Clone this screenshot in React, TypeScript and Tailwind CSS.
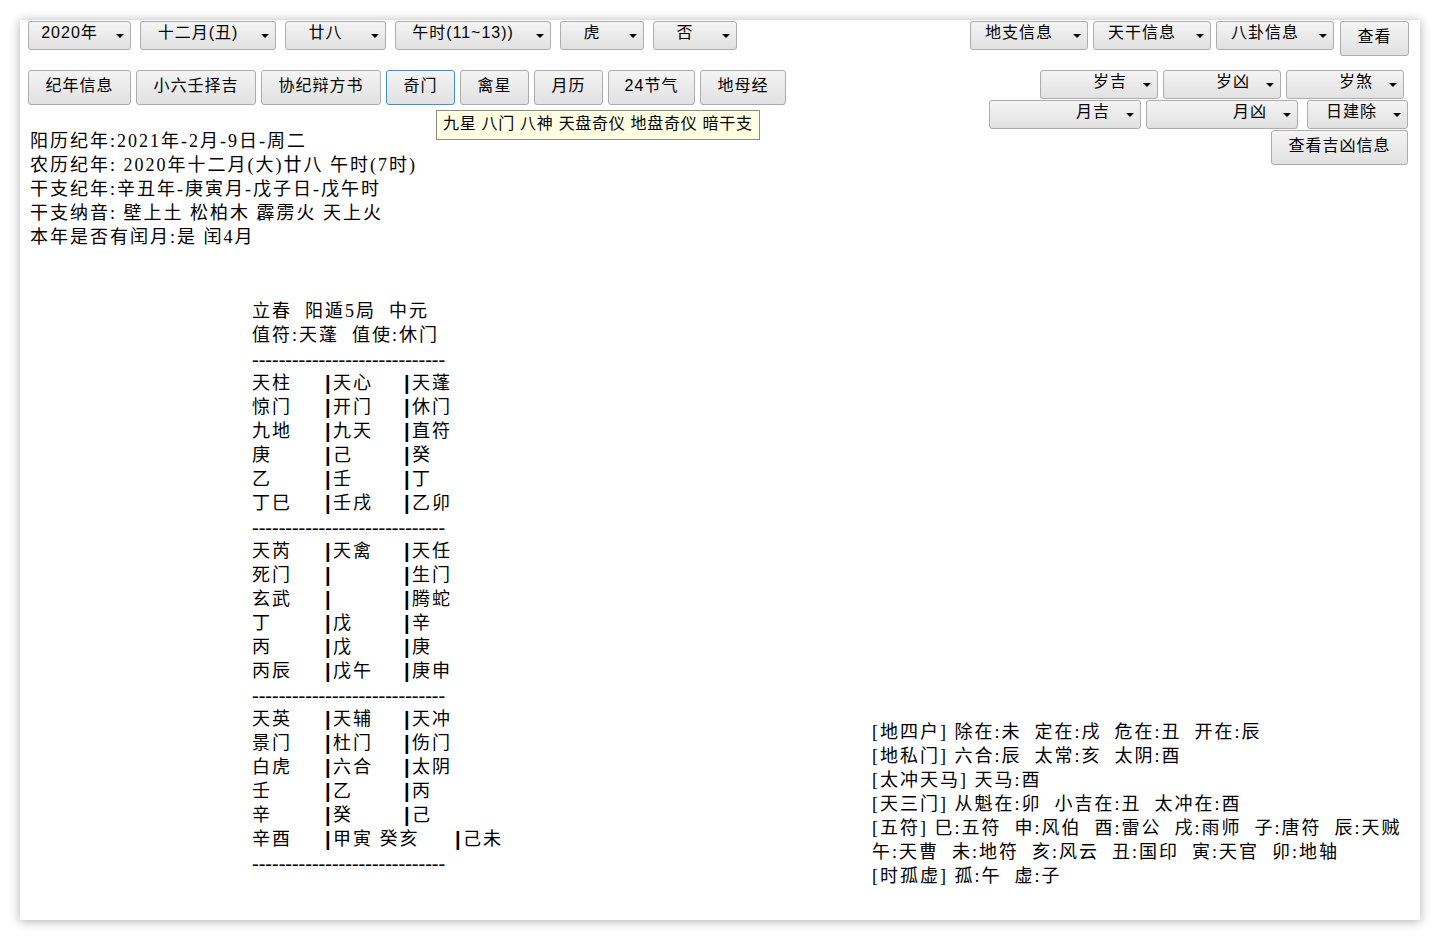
import clsx from 'clsx'

const block1 = [
  ['天柱', '天心', '天蓬'],
  ['惊门', '开门', '休门'],
  ['九地', '九天', '直符'],
  ['庚', '己', '癸'],
  ['乙', '壬', '丁'],
  ['丁巳', '壬戌', '乙卯'],
]

const block2 = [
  ['天芮', '天禽', '天任'],
  ['死门', '', '生门'],
  ['玄武', '', '腾蛇'],
  ['丁', '戊', '辛'],
  ['丙', '戊', '庚'],
  ['丙辰', '戊午', '庚申'],
]

const block3 = [
  ['天英', '天辅', '天冲'],
  ['景门', '杜门', '伤门'],
  ['白虎', '六合', '太阴'],
  ['壬', '乙', '丙'],
  ['辛', '癸', '己'],
]

function Select({
  label,
  className,
  right,
}: {
  label: string
  className: string
  right?: boolean
}) {
  return (
    <div
      className={clsx(
        "relative flex h-[29px] items-center rounded-[3px] border border-[#acacac] bg-linear-to-b from-[#f4f4f4] to-[#e1e1e1] pb-[6px] font-['Liberation_Sans','Noto_Sans_CJK_SC',sans-serif] text-[16px] tracking-[1px]",
        right ? 'justify-end pr-[30px]' : 'justify-center pr-5',
        className,
      )}
    >
      <span className="whitespace-pre">{label}</span>
      {/* arrow */}
      <span className="absolute top-[12px] right-[6px] h-0 w-0 border-x-4 border-t-4 border-x-transparent border-t-black" />
    </div>
  )
}

function Button({
  label,
  className,
  focused,
}: {
  label: string
  className: string
  focused?: boolean
}) {
  return (
    <div
      className={clsx(
        "flex h-[35px] items-center justify-center rounded-[3px] border bg-linear-to-b from-[#f4f4f4] to-[#e1e1e1] pb-[3px] font-['Liberation_Sans','Noto_Sans_CJK_SC',sans-serif] text-[16px] tracking-[1px]",
        focused ? 'border-[#3d8ee0]' : 'border-[#acacac]',
        className,
      )}
    >
      {label}
    </div>
  )
}

function Dashes() {
  return <div className="h-6 overflow-hidden text-[20px] leading-6 tracking-normal">-----------------------------</div>
}

function Bar() {
  return (
    <span className="inline-block w-[8px] align-top font-['Liberation_Sans',sans-serif] text-[20px] leading-6 font-bold">
      |
    </span>
  )
}

function Row({ cells }: { cells: string[] }) {
  return (
    <div className="flex h-6">
      <span className="w-[73px]">{cells[0]}</span>
      <span className="w-[79px]">
        <Bar />
        {cells[1]}
      </span>
      <span>
        <Bar />
        {cells[2]}
      </span>
    </div>
  )
}

export default function App() {
  return (
    <div className="h-[940px] w-[1440px] bg-white p-5 font-['Liberation_Serif','Noto_Sans_CJK_SC',serif] text-black">
      <div className="relative flex h-full flex-col bg-white shadow-[0_1px_10px_rgba(0,0,0,0.32)]">
        {/* top controls */}
        <div className="flex justify-between">
          <div className="pt-px pl-2">
            <div className="flex gap-[9px]">
              <Select label="2020年" className="w-[103px]" />
              <Select label="十二月(丑)" className="w-[136px]" />
              <Select label="廿八" className="w-[101px]" />
              <Select label="午时(11~13))" className="w-[156px]" />
              <Select label="虎" className="w-[84px]" />
              <Select label="否" className="w-[84px]" />
            </div>
            <div className="mt-5 flex gap-[5px]">
              <Button label="纪年信息" className="w-[103px]" />
              <Button label="小六壬择吉" className="w-[120px]" />
              <Button label="协纪辩方书" className="w-[120px]" />
              <Button label="奇门" className="w-[69px]" focused />
              <Button label="禽星" className="w-[69px]" />
              <Button label="月历" className="w-[69px]" />
              <Button label="24节气" className="w-[87px]" />
              <Button label="地母经" className="w-[86px]" />
            </div>
            <div className="mt-6 pl-[2px] text-[18px] leading-6 tracking-[2px] whitespace-pre">
              <div>阳历纪年:2021年-2月-9日-周二</div>
              <div>农历纪年: 2020年十二月(大)廿八 午时(7时)</div>
              <div>干支纪年:辛丑年-庚寅月-戊子日-戊午时</div>
              <div>干支纳音: 壁上土 松柏木 霹雳火 天上火</div>
              <div>本年是否有闰月:是 闰4月</div>
            </div>
          </div>

          <div className="flex flex-col items-end pt-px">
            <div className="flex items-start gap-[5px] pr-[11px]">
              <Select label="地支信息" className="w-[118px]" />
              <Select label="天干信息" className="w-[118px]" />
              <Select label="八卦信息" className="w-[118px]" />
              <Button label="查看" className="ml-px w-[69px]" />
            </div>
            <div className="mt-[14px] flex gap-[5px] pr-4">
              <Select label="岁吉" className="w-[118px]" right />
              <Select label="岁凶" className="w-[118px]" right />
              <Select label="岁煞" className="w-[118px]" right />
            </div>
            <div className="mt-px flex gap-[5px] pr-3">
              <Select label="月吉" className="w-[152px]" right />
              <Select label="月凶" className="w-[152px]" right />
              <Select label="日建除" className="ml-1 w-[101px]" right />
            </div>
            <div className="mt-px pr-3">
              <Button label="查看吉凶信息" className="w-[137px]" />
            </div>
          </div>
        </div>

        {/* tooltip over the 奇门 button */}
        <div className="absolute top-[90px] left-[416px] flex h-[30px] w-[324px] items-center border border-[#8a8a8a] bg-[#ffffe1] px-[6px] pb-[2px] font-['Liberation_Sans','Noto_Sans_CJK_SC',sans-serif] text-[16px] tracking-[0.7px] whitespace-pre">
          九星 八门 八神 天盘奇仪 地盘奇仪 暗干支
        </div>

        {/* body */}
        <div className="mt-[50px] flex pl-[232px] text-[18px] leading-6 tracking-[2px]">
          <div className="w-[620px] shrink-0 whitespace-pre">
            <div className="h-6">立春  阳遁5局  中元</div>
            <div className="h-6">值符:天蓬  值使:休门</div>
            <Dashes />
            {block1.map((r, i) => (
              <Row key={i} cells={r} />
            ))}
            <Dashes />
            {block2.map((r, i) => (
              <Row key={i} cells={r} />
            ))}
            <Dashes />
            {block3.map((r, i) => (
              <Row key={i} cells={r} />
            ))}
            <div className="flex h-6">
              <span className="w-[73px]">辛酉</span>
              <span className="w-[130px]">
                <Bar />
                甲寅 癸亥
              </span>
              <span>
                <Bar />
                己未
              </span>
            </div>
            <Dashes />
          </div>

          <div className="mt-[421px] whitespace-pre">
            <div>[地四户] 除在:未  定在:戌  危在:丑  开在:辰</div>
            <div>[地私门] 六合:辰  太常:亥  太阴:酉</div>
            <div>[太冲天马] 天马:酉</div>
            <div>[天三门] 从魁在:卯  小吉在:丑  太冲在:酉</div>
            <div>[五符] 巳:五符  申:风伯  酉:雷公  戌:雨师  子:唐符  辰:天贼</div>
            <div>午:天曹  未:地符  亥:风云  丑:国印  寅:天官  卯:地轴</div>
            <div>[时孤虚] 孤:午  虚:子</div>
          </div>
        </div>
      </div>
    </div>
  )
}
